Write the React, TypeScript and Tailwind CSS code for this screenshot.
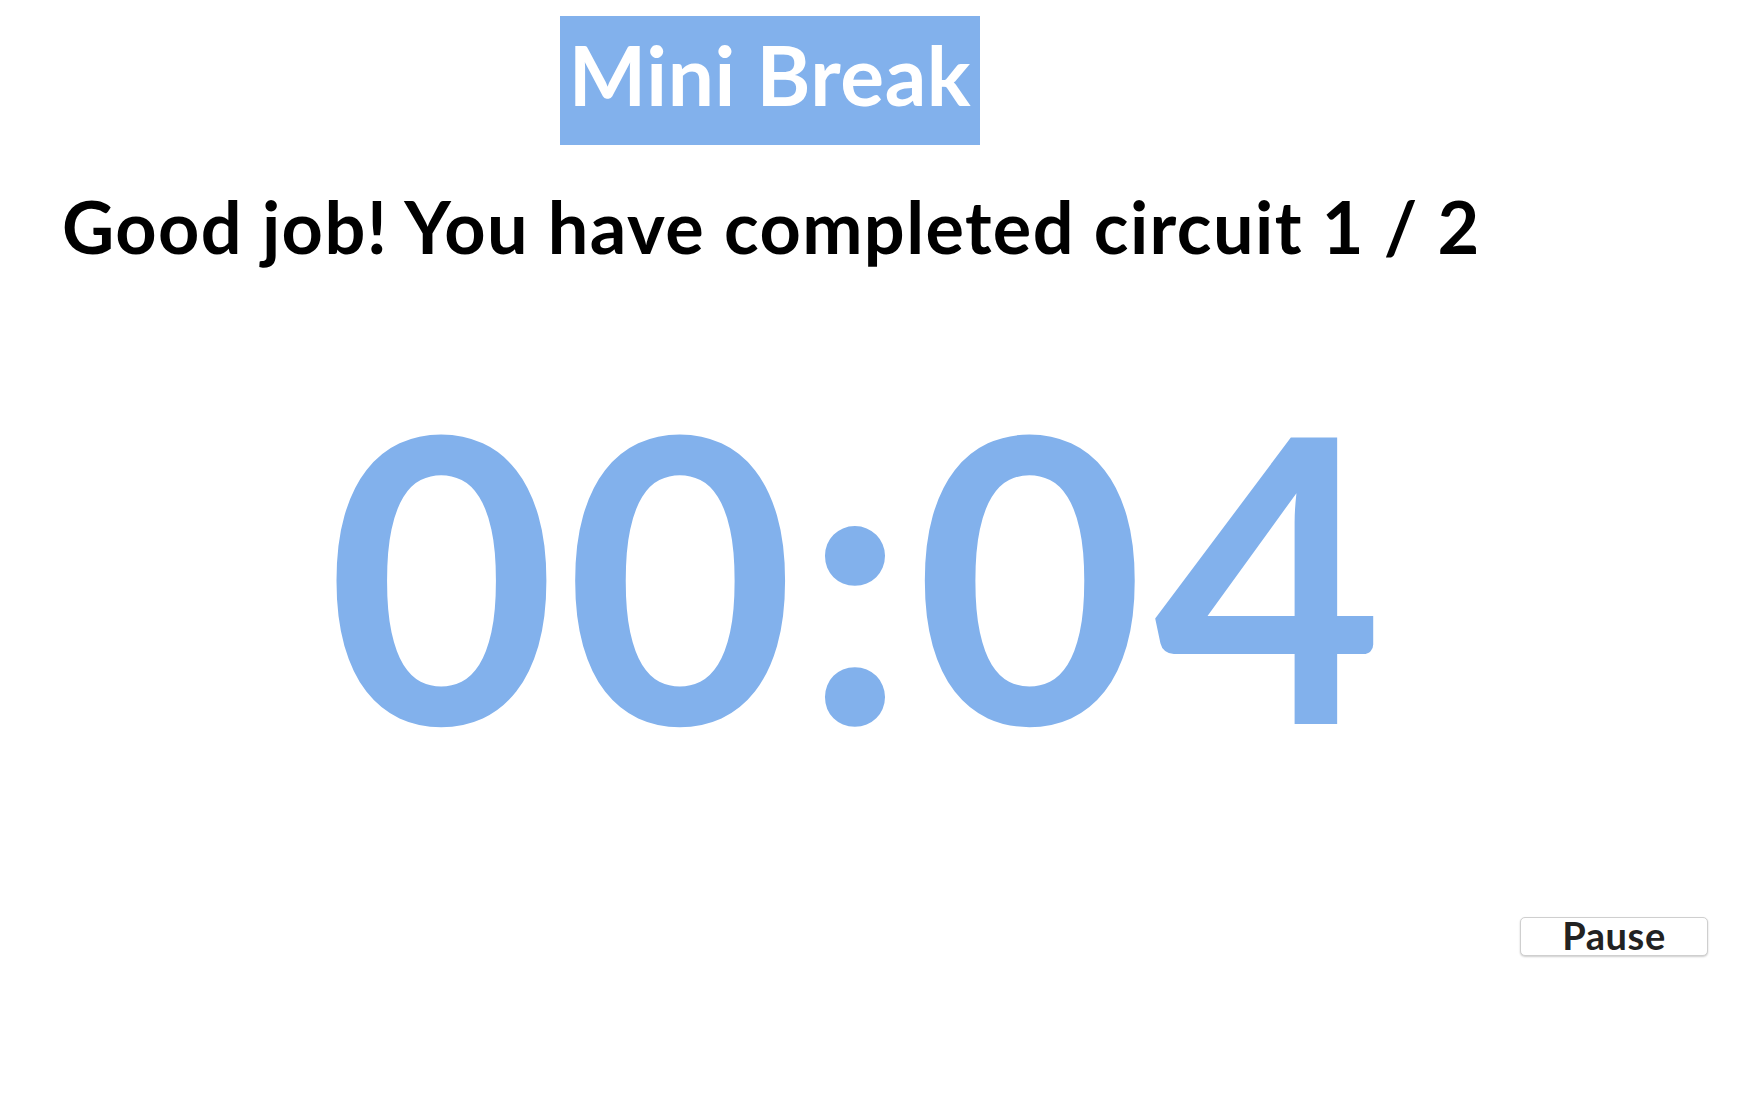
export default function App() {
  return (
    <div className="min-h-screen bg-white font-['Lato','Noto_Sans',sans-serif]">
      {/* Title */}
      <div className="pt-[16px] pl-[560px]">
        <div className="w-[420px] h-[129px] bg-[#82b1ec] pt-[17px] text-center">
          <h1 className="text-[82px] leading-none font-bold tracking-[0.6px] text-white">Mini Break</h1>
        </div>
      </div>

      {/* Status */}
      <h2 className="mt-[45px] pl-[62px] text-[72px] leading-none font-bold tracking-[1.4px] text-black">
        Good job! You have completed circuit 1 / 2
      </h2>

      {/* Timer */}
      <div className="mt-[111px] flex justify-center pr-[22px]">
        <span className="text-[396px] leading-none font-bold tracking-[9px] text-[#82b1ec]">00:04</span>
      </div>

      {/* Controls */}
      <div className="mt-[148px] flex justify-end pr-[33px]">
        <button className="w-[188px] h-[39px] rounded-[5px] border border-[#cfcfcf] bg-white shadow-[0_1px_2px_rgba(0,0,0,0.2)] flex items-center justify-center pb-[3px] text-[38px] leading-none font-bold tracking-[0.6px] text-[#222]">
          Pause
        </button>
      </div>
    </div>
  );
}
